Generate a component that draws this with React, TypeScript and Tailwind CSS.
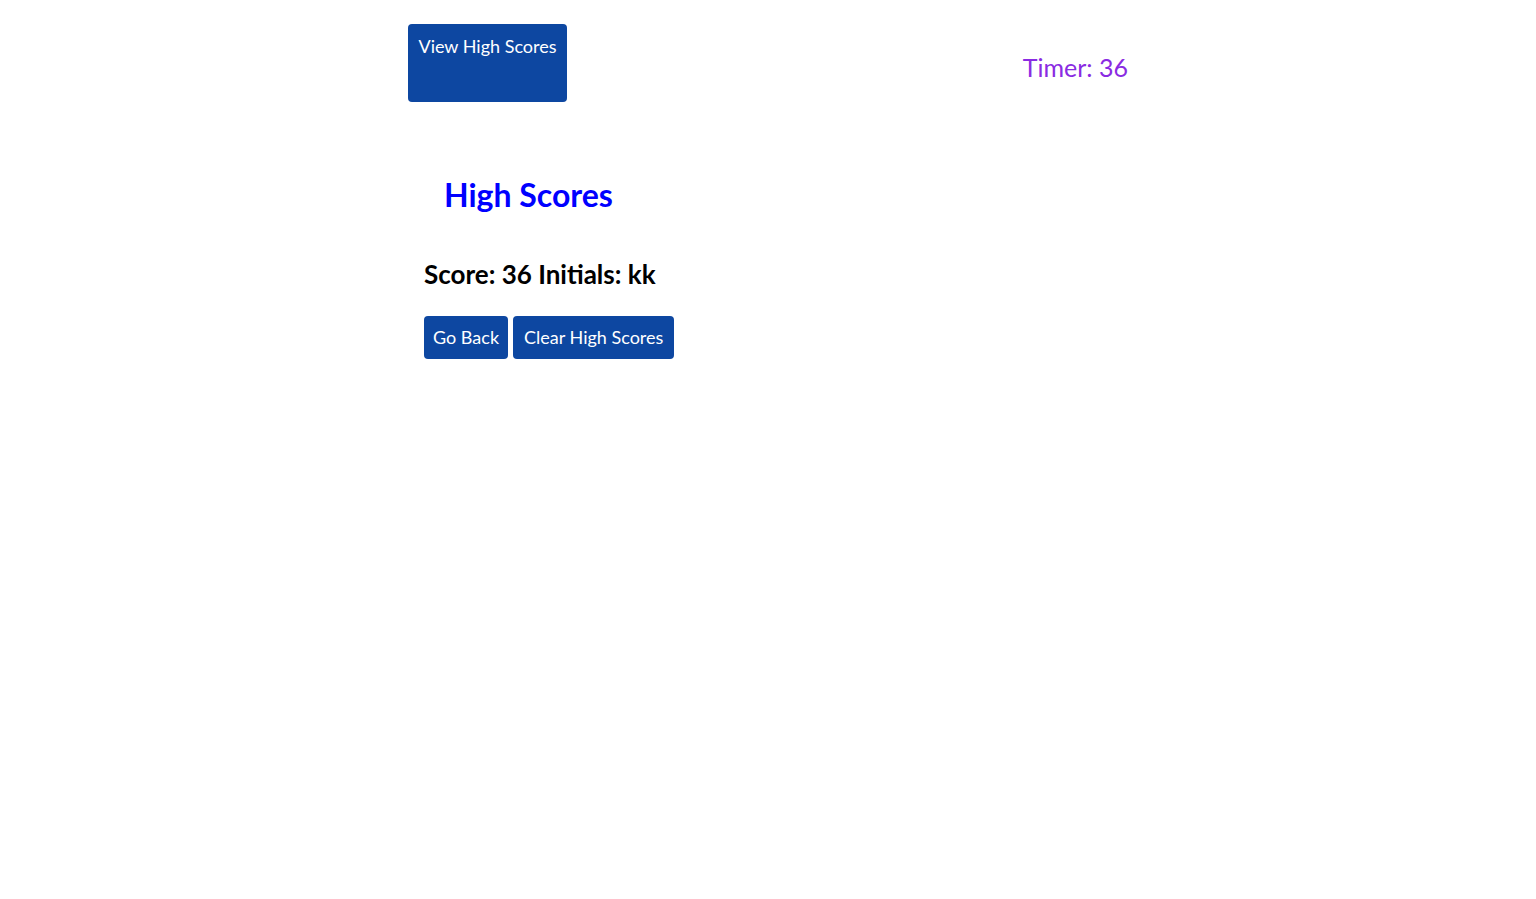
export default function App() {
  return (
    <div className="min-h-screen bg-white font-['Lato','Open_Sans',sans-serif]">
      <div className="mx-auto w-[720px] pt-6">
        <header className="flex items-start justify-between">
          <button className="flex h-[78px] w-[159px] items-start justify-center rounded bg-[#0d47a1] pt-[9px] text-center text-[18px] leading-[26px] text-white">
            View High Scores
          </button>
          <div className="mt-[28px] text-[25px] leading-[30px] text-[#8a2be2]">Timer: 36</div>
        </header>

        <main className="pl-4 pt-[73px]">
          <h1 className="pl-[20px] text-[32px] font-bold leading-[40px] text-[#0000ff]">High Scores</h1>
          <p className="mt-[43px] text-[26px] font-bold leading-[32px] text-black">Score: 36 Initials: kk</p>
          <div className="mt-[26px] flex gap-[5px]">
            <button className="h-[43px] rounded bg-[#0d47a1] px-[9px] text-[18px] text-white">Go Back</button>
            <button className="h-[43px] rounded bg-[#0d47a1] px-[11px] text-[18px] text-white">Clear High Scores</button>
          </div>
        </main>
      </div>
    </div>
  )
}
